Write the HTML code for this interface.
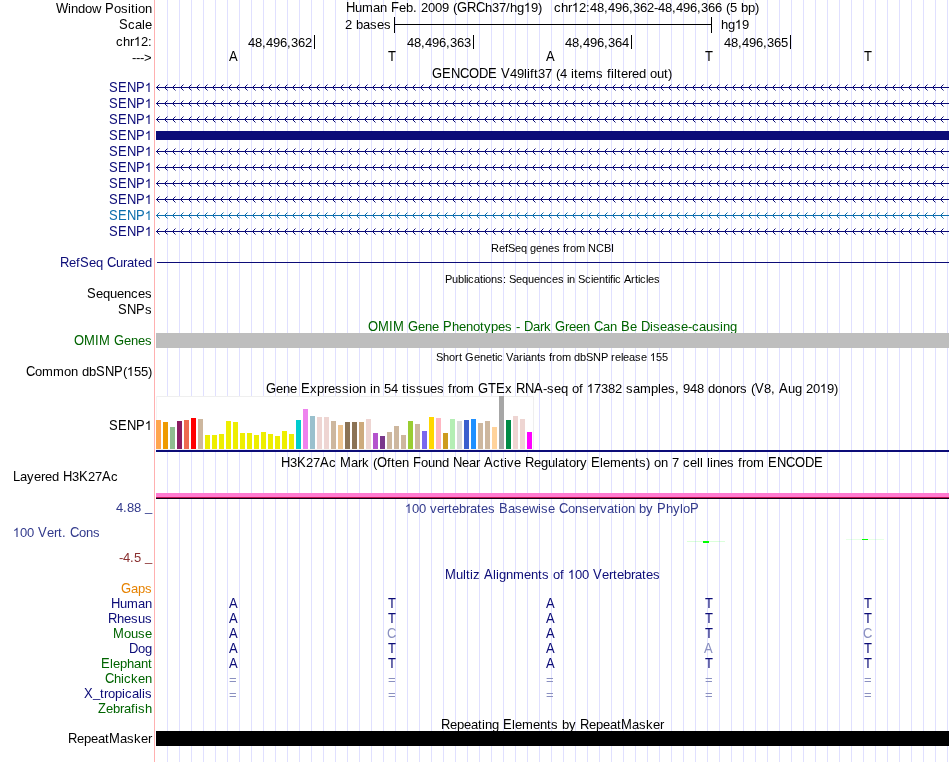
<!DOCTYPE html>
<html><head><meta charset="utf-8"><style>
html,body{margin:0;padding:0;background:#fff;overflow:hidden}
svg{display:block;will-change:transform}
text{font-family:"Liberation Sans",sans-serif;white-space:pre}
</style></head><body>
<svg width="950" height="762" viewBox="0 0 950 762" shape-rendering="crispEdges">
<rect width="950" height="762" fill="#fff"/>
<rect x="167" y="0" width="1" height="762" fill="#e0e0ff" />
<rect x="179" y="0" width="1" height="762" fill="#e0e0ff" />
<rect x="191" y="0" width="1" height="762" fill="#e0e0ff" />
<rect x="203" y="0" width="1" height="762" fill="#e0e0ff" />
<rect x="215" y="0" width="1" height="762" fill="#e0e0ff" />
<rect x="227" y="0" width="1" height="762" fill="#e0e0ff" />
<rect x="239" y="0" width="1" height="762" fill="#e0e0ff" />
<rect x="251" y="0" width="1" height="762" fill="#e0e0ff" />
<rect x="263" y="0" width="1" height="762" fill="#e0e0ff" />
<rect x="275" y="0" width="1" height="762" fill="#e0e0ff" />
<rect x="287" y="0" width="1" height="762" fill="#e0e0ff" />
<rect x="299" y="0" width="1" height="762" fill="#e0e0ff" />
<rect x="311" y="0" width="1" height="762" fill="#e0e0ff" />
<rect x="323" y="0" width="1" height="762" fill="#e0e0ff" />
<rect x="335" y="0" width="1" height="762" fill="#e0e0ff" />
<rect x="347" y="0" width="1" height="762" fill="#e0e0ff" />
<rect x="359" y="0" width="1" height="762" fill="#e0e0ff" />
<rect x="371" y="0" width="1" height="762" fill="#e0e0ff" />
<rect x="383" y="0" width="1" height="762" fill="#e0e0ff" />
<rect x="395" y="0" width="1" height="762" fill="#e0e0ff" />
<rect x="407" y="0" width="1" height="762" fill="#e0e0ff" />
<rect x="419" y="0" width="1" height="762" fill="#e0e0ff" />
<rect x="431" y="0" width="1" height="762" fill="#e0e0ff" />
<rect x="443" y="0" width="1" height="762" fill="#e0e0ff" />
<rect x="455" y="0" width="1" height="762" fill="#e0e0ff" />
<rect x="467" y="0" width="1" height="762" fill="#e0e0ff" />
<rect x="479" y="0" width="1" height="762" fill="#e0e0ff" />
<rect x="491" y="0" width="1" height="762" fill="#e0e0ff" />
<rect x="503" y="0" width="1" height="762" fill="#e0e0ff" />
<rect x="515" y="0" width="1" height="762" fill="#e0e0ff" />
<rect x="527" y="0" width="1" height="762" fill="#e0e0ff" />
<rect x="539" y="0" width="1" height="762" fill="#e0e0ff" />
<rect x="551" y="0" width="1" height="762" fill="#e0e0ff" />
<rect x="563" y="0" width="1" height="762" fill="#e0e0ff" />
<rect x="575" y="0" width="1" height="762" fill="#e0e0ff" />
<rect x="587" y="0" width="1" height="762" fill="#e0e0ff" />
<rect x="599" y="0" width="1" height="762" fill="#e0e0ff" />
<rect x="611" y="0" width="1" height="762" fill="#e0e0ff" />
<rect x="623" y="0" width="1" height="762" fill="#e0e0ff" />
<rect x="635" y="0" width="1" height="762" fill="#e0e0ff" />
<rect x="647" y="0" width="1" height="762" fill="#e0e0ff" />
<rect x="659" y="0" width="1" height="762" fill="#e0e0ff" />
<rect x="671" y="0" width="1" height="762" fill="#e0e0ff" />
<rect x="683" y="0" width="1" height="762" fill="#e0e0ff" />
<rect x="695" y="0" width="1" height="762" fill="#e0e0ff" />
<rect x="707" y="0" width="1" height="762" fill="#e0e0ff" />
<rect x="719" y="0" width="1" height="762" fill="#e0e0ff" />
<rect x="731" y="0" width="1" height="762" fill="#e0e0ff" />
<rect x="743" y="0" width="1" height="762" fill="#e0e0ff" />
<rect x="755" y="0" width="1" height="762" fill="#e0e0ff" />
<rect x="767" y="0" width="1" height="762" fill="#e0e0ff" />
<rect x="779" y="0" width="1" height="762" fill="#e0e0ff" />
<rect x="791" y="0" width="1" height="762" fill="#e0e0ff" />
<rect x="803" y="0" width="1" height="762" fill="#e0e0ff" />
<rect x="815" y="0" width="1" height="762" fill="#e0e0ff" />
<rect x="827" y="0" width="1" height="762" fill="#e0e0ff" />
<rect x="839" y="0" width="1" height="762" fill="#e0e0ff" />
<rect x="851" y="0" width="1" height="762" fill="#e0e0ff" />
<rect x="863" y="0" width="1" height="762" fill="#e0e0ff" />
<rect x="875" y="0" width="1" height="762" fill="#e0e0ff" />
<rect x="887" y="0" width="1" height="762" fill="#e0e0ff" />
<rect x="899" y="0" width="1" height="762" fill="#e0e0ff" />
<rect x="911" y="0" width="1" height="762" fill="#e0e0ff" />
<rect x="923" y="0" width="1" height="762" fill="#e0e0ff" />
<rect x="935" y="0" width="1" height="762" fill="#e0e0ff" />
<rect x="947" y="0" width="1" height="762" fill="#e0e0ff" />
<rect x="154" y="0" width="1" height="762" fill="#ffb0b0" />
<text x="56 105" y="13" fill="#000" font-size="13" transform="matrix(1 0 0 1.118 0 -1.534)" >WP</text>
<text x="68 71 78 85 92 114 121 128 131 135 138 145" y="13" fill="#000" font-size="13" >indowosition</text>
<text x="346 391 457 467 476" y="12" fill="#000" font-size="13" transform="matrix(1 0 0 1.118 0 -1.416)" >HFGRC</text>
<text x="355 362 373 380 399 406 413 421 428 435 442 453 485 492 499 506 510 517 531 538 554 561 568 579 586 590 597 604 608 615 622 629 633 640 647 654 658 665 672 676 683 690 697 701 708 715 726 730 741 748 755" y="12" fill="#000" font-size="13" >umaneb.2009(h37/hg9)chr2:48,496,362-48,496,366(5bp)</text>
<path transform="matrix(0.006348 0 0 -0.006348 523.730 12)" fill="#000" shape-rendering="geometricPrecision" d="M763 0H583V1147C540 1106 483 1065 413 1024C343 983 280 952 224 931V1105C325 1152 413 1210 488 1278C563 1346 616 1412 647 1476H763Z"/>
<path transform="matrix(0.006348 0 0 -0.006348 571.730 12)" fill="#000" shape-rendering="geometricPrecision" d="M763 0H583V1147C540 1106 483 1065 413 1024C343 983 280 952 224 931V1105C325 1152 413 1210 488 1278C563 1346 616 1412 647 1476H763Z"/>
<text x="119" y="29" fill="#000" font-size="13" transform="matrix(1 0 0 1.118 0 -3.422)" >S</text>
<text x="128 135 142 145" y="29" fill="#000" font-size="13" >cale</text>
<text x="345 356 363 370 377 384" y="29" fill="#000" font-size="13" >2bases</text>
<rect x="395" y="24" width="316" height="1" fill="#000" />
<rect x="394" y="17" width="1" height="16" fill="#000" />
<rect x="711" y="17" width="1" height="16" fill="#000" />
<text x="721 728 742" y="29" fill="#000" font-size="13" >hg9</text>
<path transform="matrix(0.006348 0 0 -0.006348 734.730 29)" fill="#000" shape-rendering="geometricPrecision" d="M763 0H583V1147C540 1106 483 1065 413 1024C343 983 280 952 224 931V1105C325 1152 413 1210 488 1278C563 1346 616 1412 647 1476H763Z"/>
<text x="116 123 130 141 148" y="46" fill="#000" font-size="13" >chr2:</text>
<path transform="matrix(0.006348 0 0 -0.006348 133.730 46)" fill="#000" shape-rendering="geometricPrecision" d="M763 0H583V1147C540 1106 483 1065 413 1024C343 983 280 952 224 931V1105C325 1152 413 1210 488 1278C563 1346 616 1412 647 1476H763Z"/>
<text x="248 255 262 266 273 280 287 291 298 305" y="47" fill="#000" font-size="13" >48,496,362</text>
<rect x="314" y="35" width="1" height="14" fill="#000" />
<text x="407 414 421 425 432 439 446 450 457 464" y="47" fill="#000" font-size="13" >48,496,363</text>
<rect x="473" y="35" width="1" height="14" fill="#000" />
<text x="565 572 579 583 590 597 604 608 615 622" y="47" fill="#000" font-size="13" >48,496,364</text>
<rect x="631" y="35" width="1" height="14" fill="#000" />
<text x="724 731 738 742 749 756 763 767 774 781" y="47" fill="#000" font-size="13" >48,496,365</text>
<rect x="790" y="35" width="1" height="14" fill="#000" />
<text x="132 136 140 144" y="62" fill="#000" font-size="13" >---&gt;</text>
<text x="229" y="61" fill="#000" font-size="13" transform="matrix(1 0 0 1.118 0 -7.198)" >A</text>
<text x="388" y="61" fill="#000" font-size="13" transform="matrix(1 0 0 1.118 0 -7.198)" >T</text>
<text x="546" y="61" fill="#000" font-size="13" transform="matrix(1 0 0 1.118 0 -7.198)" >A</text>
<text x="705" y="61" fill="#000" font-size="13" transform="matrix(1 0 0 1.118 0 -7.198)" >T</text>
<text x="864" y="61" fill="#000" font-size="13" transform="matrix(1 0 0 1.118 0 -7.198)" >T</text>
<text x="432 442 451 460 469 479 488 501" y="78" fill="#000" font-size="13" transform="matrix(1 0 0 1.118 0 -9.204)" >GENCODEV</text>
<text x="510 517 524 527 530 534 538 545 556 560 571 574 578 585 596 607 611 614 617 621 628 632 639 650 657 664 668" y="78" fill="#000" font-size="13" >49lift37(4itemsfilteredout)</text>
<defs><pattern id="arrN" x="157" y="0" width="8" height="16" patternUnits="userSpaceOnUse"><rect x="0" y="7" width="1" height="3" fill="#0c0c78"/><rect x="1" y="6" width="1" height="1" fill="#0c0c78"/><rect x="1" y="10" width="1" height="1" fill="#0c0c78"/><rect x="2" y="5" width="1" height="1" fill="#8686bb"/><rect x="2" y="11" width="1" height="1" fill="#8686bb"/></pattern><pattern id="arrT" x="157" y="0" width="8" height="16" patternUnits="userSpaceOnUse"><rect x="0" y="7" width="1" height="3" fill="#0c6ead"/><rect x="1" y="6" width="1" height="1" fill="#0c6ead"/><rect x="1" y="10" width="1" height="1" fill="#0c6ead"/><rect x="2" y="5" width="1" height="1" fill="#86b6d6"/><rect x="2" y="11" width="1" height="1" fill="#86b6d6"/></pattern></defs>
<text x="109 118 127 136" y="92" fill="#0c0c78" font-size="13" transform="matrix(1 0 0 1.118 0 -10.856)" >SENP</text>
<path transform="matrix(0.006348 0 0 -0.006348 144.730 92)" fill="#0c0c78" shape-rendering="geometricPrecision" d="M763 0H583V1147C540 1106 483 1065 413 1024C343 983 280 952 224 931V1105C325 1152 413 1210 488 1278C563 1346 616 1412 647 1476H763Z"/>
<rect x="156" y="87" width="793" height="1" fill="#0c0c78" />
<g transform="translate(0,79)"><rect x="157" y="4" width="789" height="9" fill="url(#arrN)"/></g>
<text x="109 118 127 136" y="108" fill="#0c0c78" font-size="13" transform="matrix(1 0 0 1.118 0 -12.744)" >SENP</text>
<path transform="matrix(0.006348 0 0 -0.006348 144.730 108)" fill="#0c0c78" shape-rendering="geometricPrecision" d="M763 0H583V1147C540 1106 483 1065 413 1024C343 983 280 952 224 931V1105C325 1152 413 1210 488 1278C563 1346 616 1412 647 1476H763Z"/>
<rect x="156" y="103" width="793" height="1" fill="#0c0c78" />
<g transform="translate(0,95)"><rect x="157" y="4" width="789" height="9" fill="url(#arrN)"/></g>
<text x="109 118 127 136" y="124" fill="#0c0c78" font-size="13" transform="matrix(1 0 0 1.118 0 -14.632)" >SENP</text>
<path transform="matrix(0.006348 0 0 -0.006348 144.730 124)" fill="#0c0c78" shape-rendering="geometricPrecision" d="M763 0H583V1147C540 1106 483 1065 413 1024C343 983 280 952 224 931V1105C325 1152 413 1210 488 1278C563 1346 616 1412 647 1476H763Z"/>
<rect x="156" y="119" width="793" height="1" fill="#0c0c78" />
<g transform="translate(0,111)"><rect x="157" y="4" width="789" height="9" fill="url(#arrN)"/></g>
<text x="109 118 127 136" y="140" fill="#0c0c78" font-size="13" transform="matrix(1 0 0 1.118 0 -16.520)" >SENP</text>
<path transform="matrix(0.006348 0 0 -0.006348 144.730 140)" fill="#0c0c78" shape-rendering="geometricPrecision" d="M763 0H583V1147C540 1106 483 1065 413 1024C343 983 280 952 224 931V1105C325 1152 413 1210 488 1278C563 1346 616 1412 647 1476H763Z"/>
<rect x="156" y="131" width="793" height="9" fill="#0c0c78" />
<text x="109 118 127 136" y="156" fill="#0c0c78" font-size="13" transform="matrix(1 0 0 1.118 0 -18.408)" >SENP</text>
<path transform="matrix(0.006348 0 0 -0.006348 144.730 156)" fill="#0c0c78" shape-rendering="geometricPrecision" d="M763 0H583V1147C540 1106 483 1065 413 1024C343 983 280 952 224 931V1105C325 1152 413 1210 488 1278C563 1346 616 1412 647 1476H763Z"/>
<rect x="156" y="151" width="793" height="1" fill="#0c0c78" />
<g transform="translate(0,143)"><rect x="157" y="4" width="789" height="9" fill="url(#arrN)"/></g>
<text x="109 118 127 136" y="172" fill="#0c0c78" font-size="13" transform="matrix(1 0 0 1.118 0 -20.296)" >SENP</text>
<path transform="matrix(0.006348 0 0 -0.006348 144.730 172)" fill="#0c0c78" shape-rendering="geometricPrecision" d="M763 0H583V1147C540 1106 483 1065 413 1024C343 983 280 952 224 931V1105C325 1152 413 1210 488 1278C563 1346 616 1412 647 1476H763Z"/>
<rect x="156" y="167" width="793" height="1" fill="#0c0c78" />
<g transform="translate(0,159)"><rect x="157" y="4" width="789" height="9" fill="url(#arrN)"/></g>
<text x="109 118 127 136" y="188" fill="#0c0c78" font-size="13" transform="matrix(1 0 0 1.118 0 -22.184)" >SENP</text>
<path transform="matrix(0.006348 0 0 -0.006348 144.730 188)" fill="#0c0c78" shape-rendering="geometricPrecision" d="M763 0H583V1147C540 1106 483 1065 413 1024C343 983 280 952 224 931V1105C325 1152 413 1210 488 1278C563 1346 616 1412 647 1476H763Z"/>
<rect x="156" y="183" width="793" height="1" fill="#0c0c78" />
<g transform="translate(0,175)"><rect x="157" y="4" width="789" height="9" fill="url(#arrN)"/></g>
<text x="109 118 127 136" y="204" fill="#0c0c78" font-size="13" transform="matrix(1 0 0 1.118 0 -24.072)" >SENP</text>
<path transform="matrix(0.006348 0 0 -0.006348 144.730 204)" fill="#0c0c78" shape-rendering="geometricPrecision" d="M763 0H583V1147C540 1106 483 1065 413 1024C343 983 280 952 224 931V1105C325 1152 413 1210 488 1278C563 1346 616 1412 647 1476H763Z"/>
<rect x="156" y="199" width="793" height="1" fill="#0c0c78" />
<g transform="translate(0,191)"><rect x="157" y="4" width="789" height="9" fill="url(#arrN)"/></g>
<text x="109 118 127 136" y="220" fill="#0c6ead" font-size="13" transform="matrix(1 0 0 1.118 0 -25.960)" >SENP</text>
<path transform="matrix(0.006348 0 0 -0.006348 144.730 220)" fill="#0c6ead" shape-rendering="geometricPrecision" d="M763 0H583V1147C540 1106 483 1065 413 1024C343 983 280 952 224 931V1105C325 1152 413 1210 488 1278C563 1346 616 1412 647 1476H763Z"/>
<rect x="156" y="215" width="793" height="1" fill="#0c6ead" />
<g transform="translate(0,207)"><rect x="157" y="4" width="789" height="9" fill="url(#arrT)"/></g>
<text x="109 118 127 136" y="236" fill="#0c0c78" font-size="13" transform="matrix(1 0 0 1.118 0 -27.848)" >SENP</text>
<path transform="matrix(0.006348 0 0 -0.006348 144.730 236)" fill="#0c0c78" shape-rendering="geometricPrecision" d="M763 0H583V1147C540 1106 483 1065 413 1024C343 983 280 952 224 931V1105C325 1152 413 1210 488 1278C563 1346 616 1412 647 1476H763Z"/>
<rect x="156" y="231" width="793" height="1" fill="#0c0c78" />
<g transform="translate(0,223)"><rect x="157" y="4" width="789" height="9" fill="url(#arrN)"/></g>
<text x="491 499 505 508 515 521 530 536 542 548 554 563 566 570 576 588 596 604 611" y="252" fill="#000" font-size="11" >RefSeqgenesfromNCBI</text>
<text x="60 80 107" y="267" fill="#0c0c78" font-size="13" transform="matrix(1 0 0 1.118 0 -31.506)" >RSC</text>
<text x="69 76 89 96 116 123 127 134 138 145" y="267" fill="#0c0c78" font-size="13" >efequrated</text>
<rect x="157" y="262" width="792" height="1" fill="#0c0c78" />
<text x="445 452 458 464 466 468 474 480 483 485 491 497 503 509 516 522 528 534 540 546 552 558 567 569 578 585 591 593 599 605 608 610 613 615 624 631 635 638 640 646 648 654" y="283" fill="#000" font-size="11" >Publications:SequencesinScientificArticles</text>
<text x="87" y="298" fill="#000" font-size="13" transform="matrix(1 0 0 1.118 0 -35.164)" >S</text>
<text x="96 103 110 117 124 131 138 145" y="298" fill="#000" font-size="13" >equences</text>
<text x="118 127 136" y="314" fill="#000" font-size="13" transform="matrix(1 0 0 1.118 0 -37.052)" >SNP</text>
<text x="145" y="314" fill="#000" font-size="13" >s</text>
<text x="368 378 389 393 408 443 524 555 594 621 641" y="331" fill="#006400" font-size="13" transform="matrix(1 0 0 1.118 0 -39.058)" >OMIMGPDGCBD</text>
<text x="418 425 432 452 459 466 473 480 484 491 498 505 516 533 540 544 565 569 576 583 603 610 630 650 653 660 667 674 681 688 692 699 706 713 720 723 730" y="331" fill="#006400" font-size="13" >enehenotypes-arkreenaneisease-causing</text>
<text x="74 84 95 99 114" y="345" fill="#006400" font-size="13" transform="matrix(1 0 0 1.118 0 -40.710)" >OMIMG</text>
<text x="124 131 138 145" y="345" fill="#006400" font-size="13" >enes</text>
<rect x="156" y="333" width="793" height="15" fill="#bebebe" />
<text x="436 443 449 455 459 465 474 480 486 492 495 497 506 513 519 523 525 531 537 540 549 552 556 562 574 580 586 593 601 611 615 621 623 629 635 641 656 662" y="361" fill="#000" font-size="11" >ShortGeneticVariantsfromdbSNPrelease55</text>
<path transform="matrix(0.005371 0 0 -0.005371 649.772 361)" fill="#000" shape-rendering="geometricPrecision" d="M763 0H583V1147C540 1106 483 1065 413 1024C343 983 280 952 224 931V1105C325 1152 413 1210 488 1278C563 1346 616 1412 647 1476H763Z"/>
<text x="26 96 105 114" y="376" fill="#000" font-size="13" transform="matrix(1 0 0 1.118 0 -44.368)" >CSNP</text>
<text x="35 42 53 64 71 82 89 123 134 141 148" y="376" fill="#000" font-size="13" >ommondb(55)</text>
<path transform="matrix(0.006348 0 0 -0.006348 126.730 376)" fill="#000" shape-rendering="geometricPrecision" d="M763 0H583V1147C540 1106 483 1065 413 1024C343 983 280 952 224 931V1105C325 1152 413 1210 488 1278C563 1346 616 1412 647 1476H763Z"/>
<text x="266 301 478 488 496 516 525 534 755 779" y="393" fill="#000" font-size="13" transform="matrix(1 0 0 1.118 0 -46.374)" >GEGTERNAVA</text>
<text x="276 283 290 310 317 324 328 335 342 349 352 359 370 373 384 391 402 406 409 416 423 430 437 448 452 456 463 505 543 547 554 561 572 579 594 601 608 615 626 633 640 651 658 661 668 675 683 690 697 708 715 722 729 736 740 751 764 771 788 795 806 813 827 834" y="393" fill="#000" font-size="13" >enexpressionin54tissuesfromx-seqof7382samples,948donors(8,ug209)</text>
<path transform="matrix(0.006348 0 0 -0.006348 586.730 393)" fill="#000" shape-rendering="geometricPrecision" d="M763 0H583V1147C540 1106 483 1065 413 1024C343 983 280 952 224 931V1105C325 1152 413 1210 488 1278C563 1346 616 1412 647 1476H763Z"/>
<path transform="matrix(0.006348 0 0 -0.006348 819.730 393)" fill="#000" shape-rendering="geometricPrecision" d="M763 0H583V1147C540 1106 483 1065 413 1024C343 983 280 952 224 931V1105C325 1152 413 1210 488 1278C563 1346 616 1412 647 1476H763Z"/>
<rect x="156" y="396" width="378" height="54" fill="#ffffff" />
<rect x="156" y="396" width="378" height="1" fill="#efefef" />
<rect x="533" y="396" width="1" height="54" fill="#efefef" />
<rect x="156" y="396" width="1" height="54" fill="#f4f4f4" />
<rect x="156" y="449" width="378" height="1" fill="#f2f2f2" />
<rect x="156" y="420" width="5" height="29" fill="#FFA54F" />
<rect x="163" y="422" width="5" height="27" fill="#EE9A00" />
<rect x="170" y="427" width="5" height="22" fill="#8FBC8F" />
<rect x="177" y="421" width="5" height="28" fill="#8B1C62" />
<rect x="184" y="420" width="5" height="29" fill="#EE6A50" />
<rect x="191" y="418" width="5" height="31" fill="#FF0000" />
<rect x="198" y="419" width="5" height="30" fill="#CDB79E" />
<rect x="205" y="435" width="5" height="14" fill="#EEEE00" />
<rect x="212" y="435" width="5" height="14" fill="#EEEE00" />
<rect x="219" y="434" width="5" height="15" fill="#EEEE00" />
<rect x="226" y="421" width="5" height="28" fill="#EEEE00" />
<rect x="233" y="422" width="5" height="27" fill="#EEEE00" />
<rect x="240" y="433" width="5" height="16" fill="#EEEE00" />
<rect x="247" y="433" width="5" height="16" fill="#EEEE00" />
<rect x="254" y="435" width="5" height="14" fill="#EEEE00" />
<rect x="261" y="432" width="5" height="17" fill="#EEEE00" />
<rect x="268" y="434" width="5" height="15" fill="#EEEE00" />
<rect x="275" y="436" width="5" height="13" fill="#EEEE00" />
<rect x="282" y="431" width="5" height="18" fill="#EEEE00" />
<rect x="289" y="434" width="5" height="15" fill="#EEEE00" />
<rect x="296" y="420" width="5" height="29" fill="#00CDCD" />
<rect x="303" y="409" width="5" height="40" fill="#EE82EE" />
<rect x="310" y="416" width="5" height="33" fill="#9AC0CD" />
<rect x="317" y="417" width="5" height="32" fill="#EED5D2" />
<rect x="324" y="417" width="5" height="32" fill="#EED5D2" />
<rect x="331" y="421" width="5" height="28" fill="#CDB79E" />
<rect x="338" y="425" width="5" height="24" fill="#EEC591" />
<rect x="345" y="422" width="5" height="27" fill="#8B7355" />
<rect x="352" y="422" width="5" height="27" fill="#8B7355" />
<rect x="359" y="422" width="5" height="27" fill="#CDAA7D" />
<rect x="366" y="419" width="5" height="30" fill="#EED5D2" />
<rect x="373" y="433" width="5" height="16" fill="#B452CD" />
<rect x="380" y="436" width="5" height="13" fill="#7A378B" />
<rect x="387" y="432" width="5" height="17" fill="#CDB79E" />
<rect x="394" y="426" width="5" height="23" fill="#CDB79E" />
<rect x="401" y="435" width="5" height="14" fill="#CDB79E" />
<rect x="408" y="421" width="5" height="28" fill="#9ACD32" />
<rect x="415" y="424" width="5" height="25" fill="#CDB79E" />
<rect x="422" y="431" width="5" height="18" fill="#7A67EE" />
<rect x="429" y="417" width="5" height="32" fill="#FFD700" />
<rect x="436" y="418" width="5" height="31" fill="#FFB6C1" />
<rect x="443" y="433" width="5" height="16" fill="#CD9B1D" />
<rect x="450" y="419" width="5" height="30" fill="#B4EEB4" />
<rect x="457" y="421" width="5" height="28" fill="#D9D9D9" />
<rect x="464" y="420" width="5" height="29" fill="#3A5FCD" />
<rect x="471" y="419" width="5" height="30" fill="#1E90FF" />
<rect x="478" y="423" width="5" height="26" fill="#CDB79E" />
<rect x="485" y="421" width="5" height="28" fill="#CDB79E" />
<rect x="492" y="427" width="5" height="22" fill="#FFD39B" />
<rect x="499" y="396" width="5" height="53" fill="#A6A6A6" />
<rect x="506" y="420" width="5" height="29" fill="#008B45" />
<rect x="513" y="416" width="5" height="33" fill="#EED5D2" />
<rect x="520" y="419" width="5" height="30" fill="#EED5D2" />
<rect x="527" y="432" width="5" height="17" fill="#FF00FF" />
<rect x="156" y="450" width="793" height="2" fill="#0c0c78" />
<text x="109 118 127 136" y="430" fill="#000" font-size="13" transform="matrix(1 0 0 1.118 0 -50.740)" >SENP</text>
<path transform="matrix(0.006348 0 0 -0.006348 144.730 430)" fill="#000" shape-rendering="geometricPrecision" d="M763 0H583V1147C540 1106 483 1065 413 1024C343 983 280 952 224 931V1105C325 1152 413 1210 488 1278C563 1346 616 1412 647 1476H763Z"/>
<text x="281 297 320 340 377 413 453 484 525 591 768 777 786 795 805 814" y="467" fill="#000" font-size="13" transform="matrix(1 0 0 1.118 0 -55.106)" >HKAMOFNAREENCODE</text>
<text x="290 306 313 329 351 358 362 373 387 391 395 402 421 428 435 442 462 469 476 493 500 504 507 514 534 541 548 555 558 565 569 576 580 600 603 610 621 628 635 639 646 654 661 672 683 690 697 700 707 710 713 720 727 738 742 746 753" y="467" fill="#000" font-size="13" >327cark(ftenoundearctiveegulatorylements)on7celllinesfrom</text>
<text x="13 63 79 102" y="481" fill="#000" font-size="13" transform="matrix(1 0 0 1.118 0 -56.758)" >LHKA</text>
<text x="20 27 34 41 45 52 72 88 95 111" y="481" fill="#000" font-size="13" >ayered327c</text>
<rect x="156" y="493" width="793" height="4" fill="#ff7ad0" />
<rect x="156" y="497" width="793" height="1" fill="#c01050" />
<rect x="156" y="498" width="793" height="1" fill="#100018" />
<text x="116 123 127 134" y="512" fill="#323a8c" font-size="13" >4.88</text>
<text x="145" y="511" fill="#323a8c" font-size="13" >_</text>
<text x="412 419 430 437 444 448 452 459 466 470 477 481 488 508 515 522 529 538 541 548 568 575 582 589 596 600 607 614 618 621 628 639 646 666 673 680 683" y="513" fill="#323a8c" font-size="13" >00vertebratesasewiseonservationbyhylo</text>
<text x="499 559 657 690" y="513" fill="#323a8c" font-size="13" transform="matrix(1 0 0 1.118 0 -60.534)" >BCPP</text>
<path transform="matrix(0.006348 0 0 -0.006348 404.730 513)" fill="#323a8c" shape-rendering="geometricPrecision" d="M763 0H583V1147C540 1106 483 1065 413 1024C343 983 280 952 224 931V1105C325 1152 413 1210 488 1278C563 1346 616 1412 647 1476H763Z"/>
<text x="20 27 47 54 58 62 79 86 93" y="537" fill="#323a8c" font-size="13" >00ert.ons</text>
<text x="38 70" y="537" fill="#323a8c" font-size="13" transform="matrix(1 0 0 1.118 0 -63.366)" >VC</text>
<path transform="matrix(0.006348 0 0 -0.006348 12.730 537)" fill="#323a8c" shape-rendering="geometricPrecision" d="M763 0H583V1147C540 1106 483 1065 413 1024C343 983 280 952 224 931V1105C325 1152 413 1210 488 1278C563 1346 616 1412 647 1476H763Z"/>
<text x="119 123 130 134" y="562" fill="#8a3030" font-size="13" >-4.5</text>
<text x="145" y="561" fill="#8a3030" font-size="13" >_</text>
<rect x="687" y="541" width="38" height="1" fill="#44ff44" fill-opacity="0.2"/>
<rect x="703" y="541" width="6" height="2" fill="#00ff00" />
<rect x="846" y="539" width="38" height="1" fill="#44ff44" fill-opacity="0.13"/>
<rect x="862" y="539" width="6" height="1" fill="#00ff00" />
<text x="445 484 593" y="579" fill="#0c0c78" font-size="13" transform="matrix(1 0 0 1.118 0 -68.322)" >MAV</text>
<text x="456 463 466 470 473 493 496 499 506 513 524 531 538 542 553 560 575 582 602 609 613 617 624 631 635 642 646 653" y="579" fill="#0c0c78" font-size="13" >ultizlignmentsof00ertebrates</text>
<path transform="matrix(0.006348 0 0 -0.006348 567.730 579)" fill="#0c0c78" shape-rendering="geometricPrecision" d="M763 0H583V1147C540 1106 483 1065 413 1024C343 983 280 952 224 931V1105C325 1152 413 1210 488 1278C563 1346 616 1412 647 1476H763Z"/>
<text x="121" y="593" fill="#e68200" font-size="13" transform="matrix(1 0 0 1.118 0 -69.974)" >G</text>
<text x="131 138 145" y="593" fill="#e68200" font-size="13" >aps</text>
<text x="111" y="608" fill="#0c0c78" font-size="13" transform="matrix(1 0 0 1.118 0 -71.744)" >H</text>
<text x="120 127 138 145" y="608" fill="#0c0c78" font-size="13" >uman</text>
<text x="108" y="623" fill="#0c0c78" font-size="13" transform="matrix(1 0 0 1.118 0 -73.514)" >R</text>
<text x="117 124 131 138 145" y="623" fill="#0c0c78" font-size="13" >hesus</text>
<text x="113" y="638" fill="#006400" font-size="13" transform="matrix(1 0 0 1.118 0 -75.284)" >M</text>
<text x="124 131 138 145" y="638" fill="#006400" font-size="13" >ouse</text>
<text x="129" y="653" fill="#0c0c78" font-size="13" transform="matrix(1 0 0 1.118 0 -77.054)" >D</text>
<text x="138 145" y="653" fill="#0c0c78" font-size="13" >og</text>
<text x="101" y="668" fill="#006400" font-size="13" transform="matrix(1 0 0 1.118 0 -78.824)" >E</text>
<text x="110 113 120 127 134 141 148" y="668" fill="#006400" font-size="13" >lephant</text>
<text x="105" y="683" fill="#006400" font-size="13" transform="matrix(1 0 0 1.118 0 -80.594)" >C</text>
<text x="114 121 124 131 138 145" y="683" fill="#006400" font-size="13" >hicken</text>
<text x="84" y="698" fill="#0c0c78" font-size="13" transform="matrix(1 0 0 1.118 0 -82.364)" >X</text>
<text x="93" y="697" fill="#0c0c78" font-size="13" >_</text>
<text x="100 104 108 115 122 125 132 139 142 145" y="698" fill="#0c0c78" font-size="13" >tropicalis</text>
<text x="98" y="713" fill="#006400" font-size="13" transform="matrix(1 0 0 1.118 0 -84.134)" >Z</text>
<text x="106 113 120 124 131 135 138 145" y="713" fill="#006400" font-size="13" >ebrafish</text>
<text x="229" y="608" fill="#0c0c78" font-size="13" transform="matrix(1 0 0 1.118 0 -71.744)" >A</text>
<text x="388" y="608" fill="#0c0c78" font-size="13" transform="matrix(1 0 0 1.118 0 -71.744)" >T</text>
<text x="546" y="608" fill="#0c0c78" font-size="13" transform="matrix(1 0 0 1.118 0 -71.744)" >A</text>
<text x="705" y="608" fill="#0c0c78" font-size="13" transform="matrix(1 0 0 1.118 0 -71.744)" >T</text>
<text x="864" y="608" fill="#0c0c78" font-size="13" transform="matrix(1 0 0 1.118 0 -71.744)" >T</text>
<text x="229" y="623" fill="#0c0c78" font-size="13" transform="matrix(1 0 0 1.118 0 -73.514)" >A</text>
<text x="388" y="623" fill="#0c0c78" font-size="13" transform="matrix(1 0 0 1.118 0 -73.514)" >T</text>
<text x="546" y="623" fill="#0c0c78" font-size="13" transform="matrix(1 0 0 1.118 0 -73.514)" >A</text>
<text x="705" y="623" fill="#0c0c78" font-size="13" transform="matrix(1 0 0 1.118 0 -73.514)" >T</text>
<text x="864" y="623" fill="#0c0c78" font-size="13" transform="matrix(1 0 0 1.118 0 -73.514)" >T</text>
<text x="229" y="638" fill="#0c0c78" font-size="13" transform="matrix(1 0 0 1.118 0 -75.284)" >A</text>
<text x="387" y="638" fill="#8a90c0" font-size="13" transform="matrix(1 0 0 1.118 0 -75.284)" >C</text>
<text x="546" y="638" fill="#0c0c78" font-size="13" transform="matrix(1 0 0 1.118 0 -75.284)" >A</text>
<text x="705" y="638" fill="#0c0c78" font-size="13" transform="matrix(1 0 0 1.118 0 -75.284)" >T</text>
<text x="863" y="638" fill="#8a90c0" font-size="13" transform="matrix(1 0 0 1.118 0 -75.284)" >C</text>
<text x="229" y="653" fill="#0c0c78" font-size="13" transform="matrix(1 0 0 1.118 0 -77.054)" >A</text>
<text x="388" y="653" fill="#0c0c78" font-size="13" transform="matrix(1 0 0 1.118 0 -77.054)" >T</text>
<text x="546" y="653" fill="#0c0c78" font-size="13" transform="matrix(1 0 0 1.118 0 -77.054)" >A</text>
<text x="704" y="653" fill="#8a90c0" font-size="13" transform="matrix(1 0 0 1.118 0 -77.054)" >A</text>
<text x="864" y="653" fill="#0c0c78" font-size="13" transform="matrix(1 0 0 1.118 0 -77.054)" >T</text>
<text x="229" y="668" fill="#0c0c78" font-size="13" transform="matrix(1 0 0 1.118 0 -78.824)" >A</text>
<text x="388" y="668" fill="#0c0c78" font-size="13" transform="matrix(1 0 0 1.118 0 -78.824)" >T</text>
<text x="546" y="668" fill="#0c0c78" font-size="13" transform="matrix(1 0 0 1.118 0 -78.824)" >A</text>
<text x="705" y="668" fill="#0c0c78" font-size="13" transform="matrix(1 0 0 1.118 0 -78.824)" >T</text>
<text x="864" y="668" fill="#0c0c78" font-size="13" transform="matrix(1 0 0 1.118 0 -78.824)" >T</text>
<text x="229" y="684" fill="#8a90c0" font-size="13" >=</text>
<text x="388" y="684" fill="#8a90c0" font-size="13" >=</text>
<text x="546" y="684" fill="#8a90c0" font-size="13" >=</text>
<text x="705" y="684" fill="#8a90c0" font-size="13" >=</text>
<text x="864" y="684" fill="#8a90c0" font-size="13" >=</text>
<text x="229" y="699" fill="#8a90c0" font-size="13" >=</text>
<text x="388" y="699" fill="#8a90c0" font-size="13" >=</text>
<text x="546" y="699" fill="#8a90c0" font-size="13" >=</text>
<text x="705" y="699" fill="#8a90c0" font-size="13" >=</text>
<text x="864" y="699" fill="#8a90c0" font-size="13" >=</text>
<text x="441 503 580 621" y="729" fill="#000" font-size="13" transform="matrix(1 0 0 1.118 0 -86.022)" >RERM</text>
<text x="450 457 464 471 478 482 485 492 512 515 522 533 540 547 551 562 569 589 596 603 610 617 632 639 646 653 660" y="729" fill="#000" font-size="13" >epeatinglementsbyepeatasker</text>
<text x="68 109" y="743" fill="#000" font-size="13" transform="matrix(1 0 0 1.118 0 -87.674)" >RM</text>
<text x="77 84 91 98 105 120 127 134 141 148" y="743" fill="#000" font-size="13" >epeatasker</text>
<rect x="156" y="731" width="793" height="15" fill="#000" />
</svg></body></html>
